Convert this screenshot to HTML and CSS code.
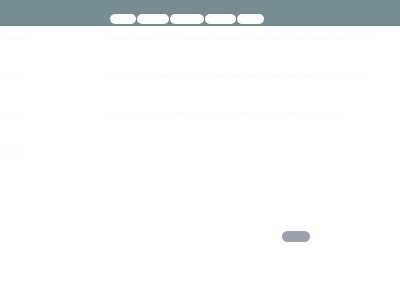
FILE: index.html
```html
<!DOCTYPE html>
<html lang="en">
<head>
<meta charset="utf-8">
<title>Page</title>
<link rel="stylesheet" href="styles.css">
</head>
<body>
<header class="topbar">
  <nav class="nav">
    <a class="pill w1" href="#">Home</a>
    <a class="pill w2" href="#">About</a>
    <a class="pill w3" href="#">Projects</a>
    <a class="pill w4" href="#">Blog</a>
    <a class="pill w5" href="#">Contact</a>
  </nav>
</header>
<div class="layout">
  <aside class="side">
    <p class="faint">Overview</p>
    <p class="faint">Settings</p>
    <p class="faint">Reports</p>
    <p class="faint">Archive</p>
  </aside>
  <div class="rail"></div>
  <main class="main">
    <p class="faint">Lorem ipsum dolor sit amet, consectetur adipiscing elit, sed do eiusmod tempor incididunt ut labore.</p>
    <p class="faint">Ut enim ad minim veniam, quis nostrud exercitation ullamco laboris nisi ut aliquip ex ea commodo.</p>
    <p class="faint">Duis aute irure dolor in reprehenderit in voluptate velit esse cillum dolore eu fugiat nulla.</p>
    <div class="actions">
      <button class="btn" type="button">More</button>
    </div>
  </main>
</div>
</body>
</html>
```
FILE: styles.css
```css
html, body {
  margin: 0;
  padding: 0;
  background: #ffffff;
  font-family: "Liberation Sans", Arial, sans-serif;
}
.topbar {
  height: 26px;
  background: #758d91;
  display: flex;
  align-items: flex-start;
  padding-left: 110px;
  box-sizing: border-box;
}
.nav {
  display: flex;
  gap: 1px;
  margin-top: 14px;
}
.pill {
  display: block;
  height: 10px;
  border-radius: 5px;
  background: #ffffff;
  color: #ffffff;
  font-size: 7px;
  line-height: 10px;
  text-align: center;
  text-decoration: none;
  overflow: hidden;
}
.w1 { width: 26px; }
.w2 { width: 32px; }
.w3 { width: 34px; }
.w4 { width: 31px; }
.w5 { width: 27px; }
.layout {
  display: grid;
  grid-template-columns: 52px 53px 1fr;
  height: 274px;
}
.faint {
  color: #fcfcfc;
  font-size: 6px;
  line-height: 8px;
  margin: 0 0 30px;
}
.side {
  padding: 8px 0 0 2px;
}
.main {
  padding: 8px 0 0 2px;
  display: flex;
  flex-direction: column;
}
.actions {
  margin-top: 83px;
  padding-left: 175px;
}
.btn {
  display: block;
  width: 28px;
  height: 11px;
  border: 0;
  border-radius: 6px;
  background: #9ba0ac;
  color: #9ba0ac;
  font-size: 6px;
  padding: 0;
  overflow: hidden;
}
```
